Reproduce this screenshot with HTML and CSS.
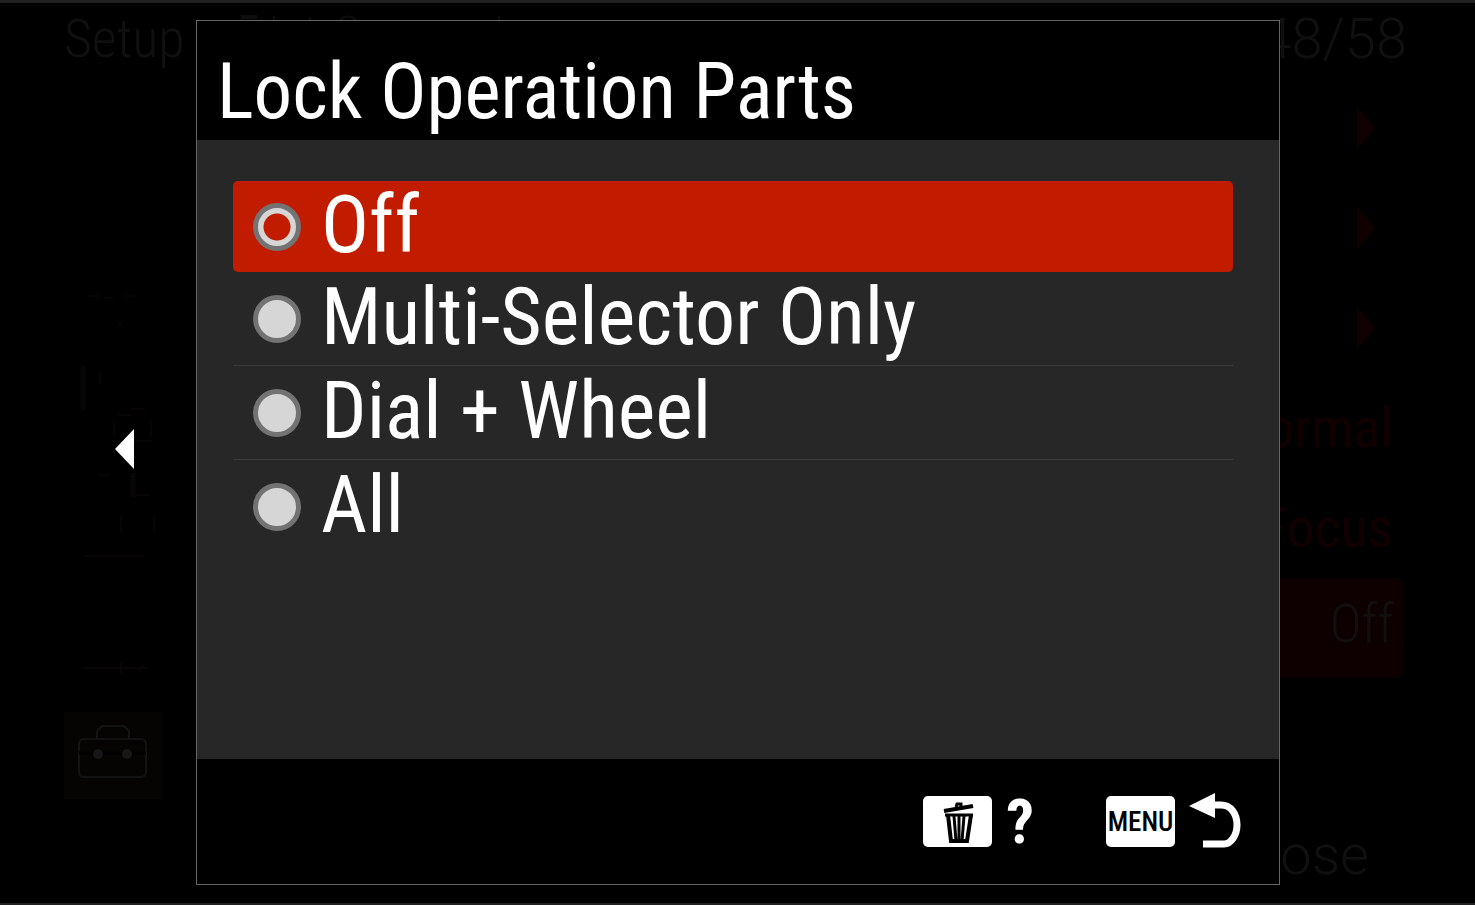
FILE: index.html
```html
<!DOCTYPE html>
<html lang="en">
<head>
<meta charset="utf-8">
<title>Lock Operation Parts</title>
<meta name="viewport" content="width=device-width, initial-scale=1">
<link rel="stylesheet" href="styles.css">
</head>
<body>
<div class="screen">
  <div class="backdrop" aria-hidden="true">
    <div class="backdrop-header">
      <span class="backdrop-title">Setup</span>
      <svg class="backdrop-marks" viewBox="0 0 262 8" fill="none" stroke="#0e0e0e" stroke-width="2">
        <path d="M0 3h16" stroke-width="4"/>
        <path d="M33 2v5M69 3v4M258 2v5M98 7q9-9 18 0"/>
      </svg>
      <span class="backdrop-page">48/58</span>
    </div>
    <div class="backdrop-main">
      <div class="rail">
        <svg class="rail-lines" viewBox="0 0 98 420" fill="none">
          <path d="M25 4h9M41 6h8M61 4h9M56 29v4M67 117h14M54 123h14M87 130v14M50 130v14M70 149h18M34 183h12M72 203h14M57 224v16M90 224v16M20 264h60" stroke="#080605" stroke-width="2"/>
          <path d="M19 74v44" stroke="#080605" stroke-width="5"/>
          <path d="M36 80v12" stroke="#080605" stroke-width="2"/>
          <path d="M69 181v24" stroke="#080605" stroke-width="5"/>
          <path d="M19 376h64M57 371v10M79 373l-4 6" stroke="#0a0807" stroke-width="2"/>
        </svg>
        <svg class="toolbox" viewBox="0 0 98 87" fill="none">
          <rect width="98" height="87" fill="#050403"/>
          <path d="M33 27v-8l5-5h22l5 5v8" stroke="#131313" stroke-width="2"/>
          <rect x="15" y="27" width="67" height="38" rx="5" stroke="#131313" stroke-width="2"/>
          <path d="M15 41h67" stroke="#000" stroke-width="3"/>
          <circle cx="34" cy="42" r="5" fill="#171717"/>
          <circle cx="63" cy="42" r="5" fill="#171717"/>
        </svg>
      </div>
      <ul class="values">
        <li class="value"><svg class="chevron" viewBox="0 0 18 44"><path d="M0 0l18 22L0 44z"/></svg></li>
        <li class="value"><svg class="chevron" viewBox="0 0 18 44"><path d="M0 0l18 22L0 44z"/></svg></li>
        <li class="value"><svg class="chevron" viewBox="0 0 18 44"><path d="M0 0l18 22L0 44z"/></svg></li>
        <li class="value value-text">Normal</li>
        <li class="value value-text">Focus</li>
        <li class="value value-current">Off</li>
      </ul>
    </div>
    <div class="backdrop-footer">Close</div>
  </div>

  <div class="front">
    <button class="back" type="button" aria-label="Previous">
      <svg class="back-icon" viewBox="0 0 19 40"><path d="M19 0v40L0 20z" fill="#fff"/></svg>
    </button>
    <main class="dialog">
      <h1 class="dialog-title">Lock Operation Parts</h1>
      <form class="options">
        <label class="option"><input class="radio" type="radio" name="lock" checked><span>Off</span></label>
        <label class="option"><input class="radio" type="radio" name="lock"><span>Multi-Selector Only</span></label>
        <label class="option"><input class="radio" type="radio" name="lock"><span>Dial + Wheel</span></label>
        <label class="option"><input class="radio" type="radio" name="lock"><span>All</span></label>
      </form>
      <footer class="dialog-footer">
        <button class="action" type="button" aria-label="Help">
          <span class="key">
            <svg class="trash" viewBox="0 0 32 48" fill="none" stroke="#000">
              <path d="M2 13L31 8" stroke-width="4"/>
              <path d="M14 9l1-3h4v3" stroke-width="3"/>
              <path d="M3 17h28" stroke-width="3"/>
              <path d="M6 17l3 26h16l4-26" stroke-width="4"/>
              <path d="M12 18l2 25M17 18v25M22 18l-2 25" stroke-width="3"/>
              <path d="M8 43h18" stroke-width="4"/>
            </svg>
          </span>
          <span class="question">?</span>
        </button>
        <button class="action" type="button">
          <span class="key">MENU</span>
          <svg class="return" viewBox="0 0 52 58">
            <path d="M0 13L26 0v25z" fill="#fff"/>
            <path d="M24 12h8C42 12 48 21 48 32C48 42 42 51 35 51H14" fill="none" stroke="#fff" stroke-width="7"/>
          </svg>
        </button>
      </footer>
    </main>
  </div>
</div>
</body>
</html>
```
FILE: styles.css
```css
* { box-sizing: border-box; }

body {
  margin: 0;
  background: #000;
  color: #fff;
  font-family: "Roboto Condensed", "Liberation Sans Narrow", Roboto, sans-serif;
}

.screen {
  display: grid;
  min-height: 100vh;
  border-top: 3px solid #202020;
  border-bottom: 2px solid #202020;
}

.backdrop,
.front {
  grid-area: 1 / 1;
  min-width: 0;
}

.backdrop {
  display: flex;
  flex-direction: column;
  padding: 0 68px 0 64px;
  color: #101010;
  font-size: 56px;
  font-weight: 300;
  line-height: 72px;
}

.backdrop-header {
  display: flex;
  height: 75px;
}

.backdrop-title {
  width: 177px;
  font-size: 54px;
}

.backdrop-marks {
  width: 262px;
  height: 8px;
  margin-top: 11px;
}

.backdrop-page {
  margin-left: auto;
  font-family: Roboto, sans-serif;
}

.backdrop-main {
  display: flex;
  justify-content: space-between;
}

.rail {
  display: flex;
  flex-direction: column;
  width: 98px;
  padding-top: 214px;
}

.rail-lines { height: 420px; }
.toolbox { height: 87px; }

.values {
  width: 160px;
  margin: 0;
  padding: 0;
  list-style: none;
}

.value {
  display: flex;
  align-items: center;
  justify-content: flex-end;
  height: 100px;
  padding-right: 14px;
}

.chevron {
  width: 18px;
  height: 44px;
  margin-right: 18px;
  fill: #100000;
}

.value-text {
  color: #120000;
  font-weight: 400;
}

.value-current {
  margin-right: 3px;
  padding: 0 10px 8px 0;
  border-radius: 8px;
  background: #0e0000;
  font-size: 54px;
}

.backdrop-footer {
  margin-top: auto;
  padding: 0 38px 12px 0;
  font-family: Roboto, sans-serif;
  text-align: right;
}

.front {
  display: grid;
  grid-template-columns: 196px minmax(0, 1fr) 195px;
  padding: 17px 0 18px;
}

.back {
  display: flex;
  align-items: center;
  justify-content: flex-end;
  padding: 0 62px 8px 0;
  border: 0;
  background: none;
}

.back-icon {
  width: 19px;
  height: 40px;
}

.dialog {
  display: flex;
  flex-direction: column;
  border: 1px solid #666;
  background: #000;
}

.dialog-title {
  margin: 0;
  padding: 26px 20px 3px;
  font-size: 77px;
  font-weight: 400;
  line-height: 90px;
}

.options {
  flex: 1;
  padding: 41px 46px 0 36px;
  background: #272727;
}

.option {
  display: flex;
  align-items: center;
  gap: 20px;
  height: 94px;
  padding: 0 20px 4px;
  border-bottom: 1px solid #3d3d3d;
  font-size: 80px;
  line-height: 88px;
}

.option:first-child {
  height: 91px;
  border: 0;
  border-radius: 5px;
}

.option:last-child { border: 0; }
.option:has(:checked) { background: #c21c00; }

.radio {
  flex: none;
  width: 48px;
  height: 48px;
  margin: 4px 0 0;
  border: 5px solid #737373;
  border-radius: 50%;
  appearance: none;
  background: #d6d6d6;
}

.radio:checked {
  background: radial-gradient(circle, #c21c00 13px, #d6d6d6 14px);
}

.dialog-footer {
  display: flex;
  align-items: center;
  justify-content: flex-end;
  gap: 72px;
  height: 125px;
  padding-right: 38px;
}

.action {
  display: flex;
  align-items: center;
  gap: 14px;
  padding: 0;
  border: 0;
  background: none;
  color: #fff;
  font: inherit;
}

.key {
  display: flex;
  align-items: center;
  justify-content: center;
  width: 69px;
  height: 51px;
  border-radius: 5px;
  background: #fff;
  color: #000;
  font-size: 27px;
  font-weight: 500;
}

.trash {
  width: 32px;
  height: 48px;
}

.question {
  font-size: 62px;
  font-weight: 700;
  line-height: 72px;
}

.return {
  width: 52px;
  height: 58px;
}
```
